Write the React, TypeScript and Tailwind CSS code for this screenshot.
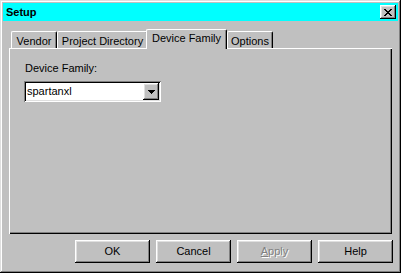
import React from "react";

const raised =
  "shadow-[inset_-1px_-1px_0_#000,inset_1px_1px_0_#fff,inset_-2px_-2px_0_#808080,inset_2px_2px_0_#dfdfdf]";

function Tab({ label, selected, w }: { label: string; selected?: boolean; w: string }) {
  if (selected) {
    return (
      <div
        className={`relative z-10 ml-[-2px] h-[20px] mb-[-1px] ${w} bg-[#c0c0c0] border-l border-t border-white border-r border-r-black rounded-t-[2px] shadow-[inset_-1px_0_0_#808080] flex justify-center pt-[2px] text-[11px] leading-[13px] text-black`}
      >
        {label}
      </div>
    );
  }
  return (
    <div
      className={`h-[17px] ${w} bg-[#c0c0c0] border-l border-t border-white border-r border-r-black rounded-t-[2px] shadow-[inset_-1px_0_0_#808080] flex justify-center pt-[3px] text-[11px] leading-[13px] text-black`}
    >
      {label}
    </div>
  );
}

function Btn({ children, w = "w-[75px]" }: { children: React.ReactNode; w?: string }) {
  return (
    <div
      className={`${w} h-[23px] bg-[#c0c0c0] ${raised} flex items-center justify-center text-[11px] leading-[13px] text-black`}
    >
      {children}
    </div>
  );
}

export default function App() {
  return (
    <div
      className="w-[401px] h-[273px] bg-[#c0c0c0] p-[3px] flex flex-col shadow-[inset_-1px_-1px_0_#000,inset_1px_1px_0_#dfdfdf,inset_-2px_-2px_0_#808080,inset_2px_2px_0_#fff]"
      style={{ fontFamily: '"Liberation Sans", Arial, sans-serif' }}
    >
      {/* Title bar */}
      <div className="h-[18px] bg-[#00ffff] flex items-center justify-between pl-[3px] pr-[2px]">
        <span className="font-bold text-[11px] leading-[13px] text-black">Setup</span>
        <div className={`w-[16px] h-[14px] bg-[#c0c0c0] ${raised} flex items-center justify-center`}>
          <svg width="8" height="7" viewBox="0 0 8 7" shapeRendering="crispEdges">
            <path
              d="M0 0h2v1H0zM6 0h2v1H6zM1 1h2v1H1zM5 1h2v1H5zM2 2h4v1H2zM3 3h2v1H3zM2 4h4v1H2zM1 5h2v1H1zM5 5h2v1H5zM0 6h2v1H0zM6 6h2v1H6z"
              fill="#000"
            />
          </svg>
        </div>
      </div>

      {/* Tabs + panel */}
      <div className="mt-[8px] mx-[6px] flex flex-col">
        <div className="flex items-end h-[19px] pl-[2px]">
          <Tab label="Vendor" w="w-[46px]" />
          <Tab label="Project Directory" w="w-[91px]" />
          <Tab label="Device Family" w="w-[81px]" selected />
          <Tab label="Options" w="w-[46px]" />
        </div>
        <div className="h-[186px] bg-[#c0c0c0] shadow-[inset_1px_1px_0_#fff,inset_-1px_-1px_0_#000,inset_-2px_-2px_0_#808080] flex flex-col pl-[15px] pt-[14px]">
          <div className="pl-[1px] text-[11px] leading-[13px] text-black">Device Family:</div>
          <div className="mt-[6px] w-[137px] h-[21px] bg-white shadow-[inset_1px_1px_0_#808080,inset_-1px_-1px_0_#fff,inset_2px_2px_0_#000,inset_-2px_-2px_0_#dfdfdf] flex items-center justify-between pl-[3px] pr-[2px]">
            <span className="text-[11px] leading-[13px] text-black">spartanxl</span>
            <div className={`w-[16px] h-[17px] bg-[#c0c0c0] ${raised} flex items-center justify-center`}>
              <svg width="7" height="4" viewBox="0 0 7 4" shapeRendering="crispEdges">
                <path d="M0 0h7v1H0zM1 1h5v1H1zM2 2h3v1H2zM3 3h1v1H3z" fill="#000" />
              </svg>
            </div>
          </div>
        </div>
      </div>

      {/* Buttons */}
      <div className="mt-[6px] flex justify-end gap-[6px] pr-[5px]">
        <Btn>OK</Btn>
        <Btn>Cancel</Btn>
        <Btn>
          <span className="text-[#808080] [text-shadow:1px_1px_0_#fff]">
            <span className="underline">A</span>pply
          </span>
        </Btn>
        <Btn>Help</Btn>
      </div>
    </div>
  );
}
